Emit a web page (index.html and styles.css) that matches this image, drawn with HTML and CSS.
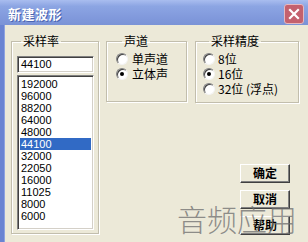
FILE: index.html
```html
<!DOCTYPE html>
<html>
<head>
<meta charset="utf-8">
<link rel="stylesheet" href="styles.css">
</head>
<body>
<div class="titlebar">
  <span class="title">新建波形</span>
  <span class="close"><svg width="12" height="12" viewBox="0 0 12 12"><path d="M2 2 L10 10 M10 2 L2 10" stroke="#fff" stroke-width="2.2" stroke-linecap="square"/></svg></span>
</div>
<div class="frame">
  <fieldset class="group g-rate">
    <legend class="legend l-rate">采样率</legend>
    <div class="edit">44100</div>
    <div class="list">
      <div class="item">192000</div>
      <div class="item">96000</div>
      <div class="item">88200</div>
      <div class="item">64000</div>
      <div class="item">48000</div>
      <div class="item selected">44100</div>
      <div class="item">32000</div>
      <div class="item">22050</div>
      <div class="item">16000</div>
      <div class="item">11025</div>
      <div class="item">8000</div>
      <div class="item">6000</div>
    </div>
  </fieldset>
  <div class="right">
    <div class="top-row">
      <fieldset class="group g-chan">
        <legend class="legend l-chan">声道</legend>
        <div class="radio-row chan-row"><span class="radio"></span><span class="rlabel">单声道</span></div>
        <div class="radio-row chan-row"><span class="radio checked"></span><span class="rlabel">立体声</span></div>
      </fieldset>
      <fieldset class="group g-bits">
        <legend class="legend l-bits">采样精度</legend>
        <div class="radio-row bits-row"><span class="radio"></span><span class="rlabel">8位</span></div>
        <div class="radio-row bits-row"><span class="radio checked"></span><span class="rlabel">16位</span></div>
        <div class="radio-row bits-row"><span class="radio"></span><span class="rlabel">32位 (浮点)</span></div>
      </fieldset>
    </div>
    <div class="buttons">
      <div class="btn">确定</div>
      <div class="btn">取消</div>
      <div class="btn">帮助</div>
    </div>
  </div>
</div>
<div class="watermark">音频应用</div>
</body>
</html>
```

FILE: styles.css
```css
html, body {
  margin: 0;
  padding: 0;
}
body {
  width: 308px;
  height: 242px;
  overflow: hidden;
  background: #ece9d8;
  font-family: "Noto Sans CJK SC", "Liberation Sans", sans-serif;
  font-size: 12px;
  color: #000;
  position: relative;
}
.titlebar {
  height: 25px;
  background: linear-gradient(to bottom, #a9bdef 0%, #8ca5e3 25%, #8199dc 70%, #7a93d6 100%);
  display: flex;
  align-items: center;
  justify-content: space-between;
  padding: 0 4px 0 8px;
  box-sizing: border-box;
}
.title {
  color: #fff;
  font-weight: bold;
  font-size: 13px;
  line-height: 15px;
  padding-top: 2px;
  text-shadow: 1px 1px 0 #4a64b0;
  letter-spacing: 0.5px;
}
.close {
  width: 18px;
  height: 18px;
  margin-top: 3px;
  background: #c4616e;
  border: 1px solid #e6b9c0;
  border-radius: 3px;
  display: flex;
  align-items: center;
  justify-content: center;
}
.close svg {
  display: block;
}
.frame {
  display: flex;
  gap: 7px;
  height: 217px;
  border-left: 4px solid #6a84d2;
  box-shadow: inset 1px 0 0 #8ea3e0;
  padding: 9px 0 0 7px;
  box-sizing: border-box;
}
.group {
  margin: 0;
  padding: 0;
  border: 1px solid #c2bead;
  box-shadow: inset 1px 1px 0 #fff, 1px 1px 0 #fff;
  box-sizing: border-box;
  min-width: 0;
}
.legend {
  padding: 0 2px;
  font-size: 12px;
  line-height: 14px;
}
.l-rate { margin-left: 4px; }
.l-chan { margin-left: 6px; }
.l-bits { margin-left: 6px; }
.g-rate {
  width: 88px;
  height: 200px;
  padding: 8px 0 0 5px;
}
.edit {
  width: 77px;
  height: 17px;
  box-sizing: border-box;
  background: #fff;
  border: 1px solid;
  border-color: #808080 #fff #fff #808080;
  box-shadow: inset 1px 1px 0 #404040, inset -1px -1px 0 #d4d0c8;
  font-family: "Liberation Sans", sans-serif;
  font-size: 11px;
  line-height: 13px;
  padding: 1px 0 0 3px;
}
.list {
  margin-top: 2px;
  width: 77px;
  height: 155px;
  box-sizing: border-box;
  background: #fff;
  border: 1px solid;
  border-color: #808080 #fff #fff #808080;
  box-shadow: inset 1px 1px 0 #404040, inset -1px -1px 0 #d4d0c8;
  padding: 2px 2px 0 2px;
  font-family: "Liberation Sans", sans-serif;
  font-size: 11px;
}
.item {
  height: 12px;
  line-height: 12px;
  padding-left: 1px;
}
.item.selected {
  background: #316ac5;
  color: #fff;
}
.right {
  display: flex;
  flex-direction: column;
}
.top-row {
  display: flex;
  gap: 8px;
}
.g-chan {
  width: 81px;
  height: 68px;
  padding: 3px 0 0 9px;
}
.g-bits {
  width: 104px;
  height: 69px;
  padding: 3px 0 0 7px;
}
.radio-row {
  display: flex;
  align-items: center;
  height: 15px;
}
.chan-row { gap: 4px; }
.bits-row { gap: 3px; }
.radio {
  width: 12px;
  height: 12px;
  box-sizing: border-box;
  border-radius: 50%;
  background: #fff;
  border: 1px solid;
  border-color: #808080 #f4f4f4 #f4f4f4 #808080;
  box-shadow: inset 1px 1px 0 #404040;
  display: flex;
  align-items: center;
  justify-content: center;
  flex: none;
}
.radio.checked::after {
  content: "";
  width: 4px;
  height: 4px;
  border-radius: 50%;
  background: #000;
}
.rlabel {
  line-height: 15px;
  white-space: nowrap;
}
.buttons {
  display: flex;
  flex-direction: column;
  align-items: flex-end;
  gap: 7px;
  margin-top: 61px;
  padding-right: 9px;
}
.btn {
  width: 50px;
  height: 19px;
  box-sizing: border-box;
  border: 1px solid;
  border-color: #fff #404040 #404040 #fff;
  box-shadow: inset -1px -1px 0 #808080;
  text-align: center;
  font-weight: bold;
  font-size: 12px;
  line-height: 16px;
}
.watermark {
  position: absolute;
  left: 177px;
  top: 198px;
  font-size: 30px;
  line-height: 40px;
  font-weight: 300;
  color: rgba(110, 110, 110, 0.75);
  letter-spacing: 0px;
  white-space: nowrap;
}
```
